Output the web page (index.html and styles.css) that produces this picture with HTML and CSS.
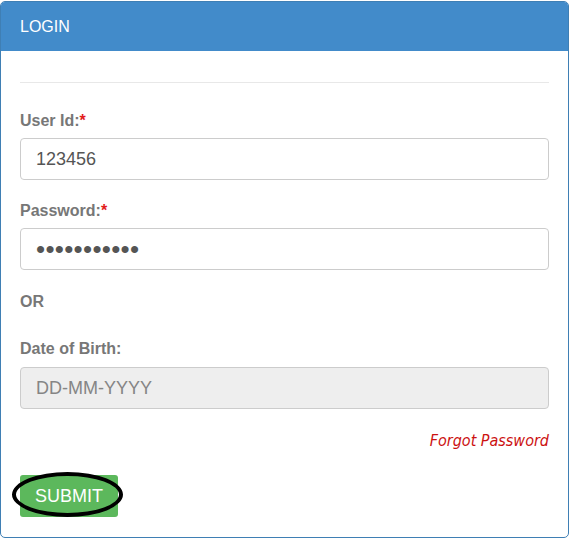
FILE: index.html
```html
<!DOCTYPE html>
<html lang="en">
<head>
  <meta charset="UTF-8">
  <title>Login</title>
  <link rel="stylesheet" href="styles.css">
</head>
<body>
  <div class="panel">
    <div class="panel-heading">LOGIN</div>
    <div class="panel-body">
      <hr class="divider">
      <form class="login-form">
        <div class="form-group">
          <label for="userid">User Id:<span class="req">*</span></label>
          <input type="text" id="userid" class="form-control" value="123456">
        </div>
        <div class="form-group">
          <label for="password">Password:<span class="req">*</span></label>
          <input type="password" id="password" class="form-control pass" value="abcdefghijk">
        </div>
        <div class="or-text">OR</div>
        <div class="form-group">
          <label for="dob" class="dob-label">Date of Birth:</label>
          <input type="text" id="dob" class="form-control readonly" placeholder="DD-MM-YYYY" readonly>
        </div>
        <div class="forgot-row">
          <a href="#" class="forgot">Forgot Password</a>
        </div>
        <div class="submit-wrap">
          <button type="button" class="btn-submit">SUBMIT</button>
          <span class="circle-mark"></span>
        </div>
      </form>
    </div>
  </div>
</body>
</html>
```

FILE: styles.css
```css
body {
  margin: 0;
  background: #ffffff;
  font-family: "Liberation Sans", Arial, sans-serif;
}

.panel {
  width: 569px;
  height: 537px;
  margin-top: 1px;
  box-sizing: border-box;
  border: 1px solid #3f7fb4;
  border-radius: 5px;
  overflow: hidden;
}

.panel-heading {
  height: 49px;
  box-sizing: border-box;
  padding: 15px 19px;
  background-color: #428bca;
  color: #ffffff;
  font-size: 16px;
  line-height: 19px;
}

.panel-body {
  padding: 20px 19px 19px;
}

.divider {
  border: 0;
  border-top: 1px solid #e8e8e8;
  margin: 11px 0 27px;
}

.form-group {
  margin-bottom: 20px;
}

label,
.or-text {
  display: block;
  margin-bottom: 6px;
  color: #777777;
  font-size: 16px;
  font-weight: bold;
  line-height: 22px;
}

.req {
  color: #e21c1c;
}

/* margins collapse with the form-group above */
.or-text {
  margin-top: 21px;
  margin-bottom: 25px;
}

.dob-label {
  margin-bottom: 7px;
}

.form-control {
  display: block;
  width: 100%;
  height: 42px;
  box-sizing: border-box;
  padding: 6px 15px;
  border: 1px solid #cccccc;
  border-radius: 4px;
  background: #ffffff;
  color: #555555;
  font-family: "Liberation Sans", Arial, sans-serif;
  font-size: 18px;
  outline: none;
}

.form-control.pass {
  font-size: 26px;
  letter-spacing: 0.3px;
  padding-top: 4px;
  padding-bottom: 4px;
}

.form-control.readonly {
  background: #eeeeee;
}

.form-control::placeholder {
  color: #858585;
}

.forgot-row {
  margin-top: 22px;
  text-align: right;
  line-height: 20px;
}

.forgot {
  color: #cc1111;
  font-family: "DejaVu Sans Condensed", "DejaVu Sans", sans-serif;
  font-size: 16px;
  font-style: italic;
  text-decoration: none;
}

.submit-wrap {
  position: relative;
  margin-top: 24px;
  width: 98px;
}

.btn-submit {
  height: 42px;
  width: 98px;
  padding: 0;
  border: none;
  border-radius: 3px;
  background-color: #5cb85c;
  color: #ffffff;
  font-family: "Liberation Sans", Arial, sans-serif;
  font-size: 18px;
  display: block;
}

.circle-mark {
  position: absolute;
  left: -8px;
  top: -3px;
  width: 111px;
  height: 45px;
  box-sizing: border-box;
  border: 4px solid #000000;
  border-radius: 50%;
  pointer-events: none;
}
```
